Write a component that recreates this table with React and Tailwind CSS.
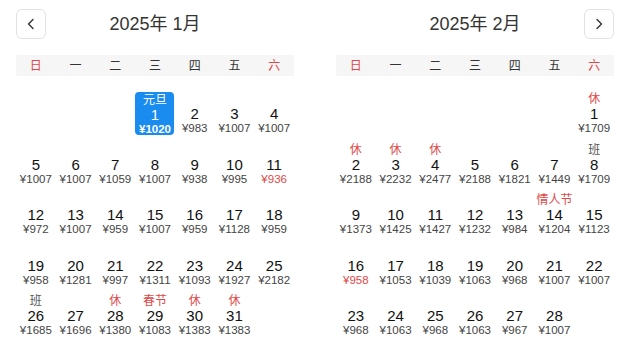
import React from 'react';

const WEEK = ['日', '一', '二', '三', '四', '五', '六'];

const jan = {
  title: '2025年 1月',
  offset: 3,
  days: [
    [1020, '元旦'], [983], [1007], [1007], [1007], [1007], [1059], [1007], [938], [995],
    [936, null, true], [972], [1007], [959], [1007], [959], [1128], [959], [958], [1281],
    [997], [1311], [1093], [1927], [2182], [1685, '班'], [1696], [1380, '休'], [1083, '春节'],
    [1383, '休'], [1383, '休'],
  ],
  selected: 1,
};

const feb = {
  title: '2025年 2月',
  offset: 6,
  days: [
    [1709, '休'], [2188, '休'], [2232, '休'], [2477, '休'], [2188], [1821], [1449], [1709, '班'],
    [1373], [1425], [1427], [1232], [984], [1204, '情人节'], [1123], [958, null, true], [1053],
    [1039], [1063], [968], [1007], [1007], [968], [1063], [968], [1063], [967], [1007],
  ],
};

const ChevronLeft = () => (
  <svg width="14" height="14" viewBox="0 0 14 14" fill="none">
    <path d="M9 2.5 L4.5 7 L9 11.5" stroke="#333" strokeWidth="1.4" strokeLinecap="round" strokeLinejoin="round" />
  </svg>
);

const ChevronRight = () => (
  <svg width="14" height="14" viewBox="0 0 14 14" fill="none">
    <path d="M5 2.5 L9.5 7 L5 11.5" stroke="#333" strokeWidth="1.4" strokeLinecap="round" strokeLinejoin="round" />
  </svg>
);

const NavButton = ({ children }) => (
  <button className="w-[30px] h-[30px] flex items-center justify-center border border-[#e2e2e2] rounded-[6px] bg-white">
    {children}
  </button>
);

const DayCell = ({ day, price, label, low, selected }) => {
  if (selected) {
    return (
      <div className="flex justify-center">
        <div className="w-[39px] h-[43px] -mt-[1px] bg-[#1a8cf0] rounded-[4px] flex flex-col items-center text-white">
          <span className="text-[12px] leading-[14px] pt-[1px]">{label}</span>
          <span className="text-[15px] leading-[15px]">{day}</span>
          <span className="text-[11.5px] leading-[14px] font-bold">¥{price}</span>
        </div>
      </div>
    );
  }
  const labelColor = label === '班' ? 'text-[#555]' : 'text-[#e04848]';
  return (
    <div className="h-[42px] flex flex-col items-center">
      <span className={`text-[12px] leading-[13px] h-[13px] ${labelColor}`}>{label || ''}</span>
      <span className="text-[15px] leading-[15px] text-[#111]">{day}</span>
      <span className={`text-[11.5px] leading-[14px] ${low ? 'text-[#e04848]' : 'text-[#444]'}`}>¥{price}</span>
    </div>
  );
};

const Month = ({ data, left }) => {
  const cells = [];
  for (let i = 0; i < data.offset; i++) cells.push(<div key={`e${i}`} className="h-[42px]" />);
  data.days.forEach(([price, label, low], i) => {
    cells.push(
      <DayCell key={i} day={i + 1} price={price} label={label} low={low} selected={data.selected === i + 1} />
    );
  });

  return (
    <div className="w-[278px] flex flex-col">
      <div className="h-[30px] mt-[9px] flex items-center justify-between">
        {left ? <NavButton><ChevronLeft /></NavButton> : <div className="w-[30px]" />}
        <span className="text-[18px] text-[#333]">{data.title}</span>
        {left ? <div className="w-[30px]" /> : <NavButton><ChevronRight /></NavButton>}
      </div>
      <div className="mt-[16px] h-[21px] bg-[#f6f6f6] grid grid-cols-7 items-center">
        {WEEK.map((w, i) => (
          <span key={w} className={`text-center text-[12px] ${i === 0 || i === 6 ? 'text-[#e04848]' : 'text-[#333]'}`}>
            {w}
          </span>
        ))}
      </div>
      <div className="mt-[17px] grid grid-cols-7 gap-y-[8.6px]">{cells}</div>
    </div>
  );
};

export default function App() {
  return (
    <div
      className="w-[622px] h-[344px] bg-white overflow-hidden flex gap-[42px] pl-[16px] pr-[8px]"
      style={{ fontFamily: '"Liberation Sans", "Noto Sans CJK SC", sans-serif' }}
    >
      <Month data={jan} left />
      <Month data={feb} />
    </div>
  );
}
